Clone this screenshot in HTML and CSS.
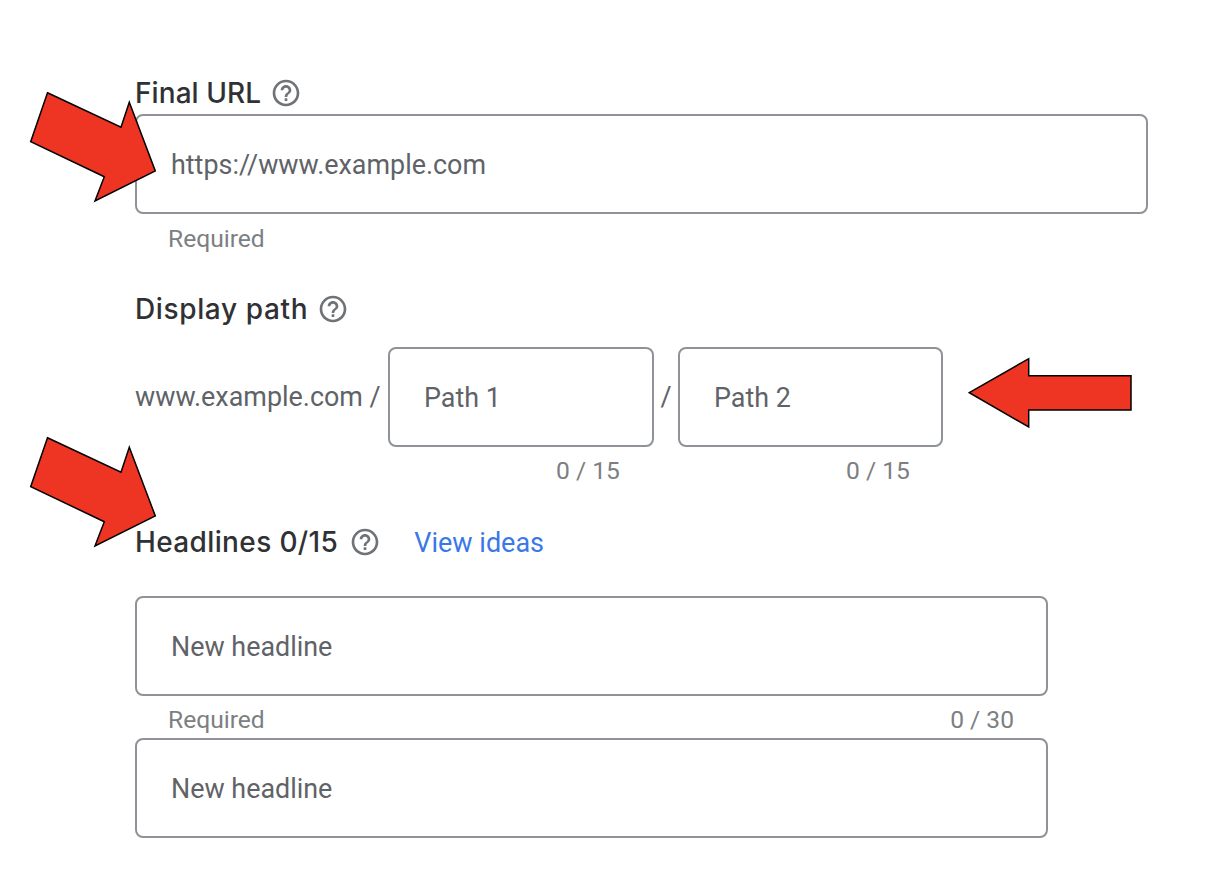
FILE: index.html
```html
<!DOCTYPE html>
<html lang="en">
<head>
  <meta charset="UTF-8">
  <meta name="viewport" content="width=device-width, initial-scale=1.0">
  <title>Final URL and headlines</title>
  <link rel="stylesheet" href="styles.css">
</head>
<body>
  <svg width="0" height="0" class="defs">
    <symbol id="help" viewBox="0 0 24 24">
      <path d="M11 18h2v-2h-2v2zm1-16C6.48 2 2 6.48 2 12s4.48 10 10 10 10-4.48 10-10S17.52 2 12 2zm0 18c-4.41 0-8-3.59-8-8s3.59-8 8-8 8 3.59 8 8-3.59 8-8 8zm0-14c-2.21 0-4 1.79-4 4h2c0-1.100.9-2 2-2s2 .9 2 2c0 2-3 1.750-3 5h2c0-2.250 3-2.500 3-5 0-2.210-1.790-4-4-4z"/>
    </symbol>
  </svg>

  <div id="app">
    <div class="label-row label-url">
      <span class="label">Final URL</span>
      <svg class="help"><use href="#help"/></svg>
    </div>
    <div class="field field-url">https://www.example.com</div>
    <div class="hint hint-url"><span>Required</span></div>

    <div class="label-row label-path">
      <span class="label">Display path</span>
      <svg class="help"><use href="#help"/></svg>
    </div>
    <div class="path-row">
      <span class="domain">www.example.com /</span>
      <div class="field field-path">Path 1</div>
      <span class="slash">/</span>
      <div class="field field-path">Path 2</div>
    </div>
    <div class="path-counts">
      <span class="count">0 / 15</span>
      <span class="count">0 / 15</span>
    </div>

    <div class="label-row label-headlines">
      <span class="label">Headlines 0/15</span>
      <svg class="help"><use href="#help"/></svg>
      <a class="ideas" href="#">View ideas</a>
    </div>
    <div class="field field-headline">New headline</div>
    <div class="hint hint-headline"><span>Required</span><span>0 / 30</span></div>
    <div class="field field-headline">New headline</div>
  </div>

  <!-- red arrows drawn on top of the form -->
  <svg class="arrows" viewBox="0 0 1232 886">
    <polygon points="47.500,92.700 121,127.300 129.300,102.300 155.300,171 95,201 104.300,176.700 30.700,141.700"/>
    <polygon points="969.300,392.700 1028.700,358.700 1028.700,375.700 1131,375.700 1131,410 1028.700,410 1028.700,427"/>
    <polygon points="47.500,437.700 121,472.300 129.300,447.300 155.300,516 95,546 104.300,521.700 30.700,486.700"/>
  </svg>
</body>
</html>
```

FILE: styles.css
```css
:root {
  --hint-color: #7c7f82;
  --border-color: #8f9397;
  --link-color: #3b78e7;
}

* {
  box-sizing: border-box;
  margin: 0;
  padding: 0;
}

body {
  position: relative;
  height: 886px;
  overflow: hidden;
  background: white;
  font-family: 'Roboto', Arial, sans-serif;
  color: #5f6368;
}

.defs {
  position: absolute;
}

#app {
  padding: 74px 84px 0 135px;
}

.label-row {
  display: flex;
  align-items: center;
  height: 40px;
  padding-bottom: 2px;
}

.label {
  font-family: 'Inter', 'Roboto', sans-serif;
  font-size: 28px;
  font-weight: 500;
  color: #303134;
}

.label-url .label {
  letter-spacing: 0.08px;
}

.label-path .label {
  letter-spacing: 0.63px;
}

.label-headlines .label {
  letter-spacing: 0.37px;
}

.help {
  width: 32px;
  height: 32px;
  margin-left: 9px;
  fill: #6f7377;
}

.label-headlines .help {
  margin-left: 11px;
}

.ideas {
  margin-left: 33px;
  padding-top: 2px;
  font-size: 27px;
  color: var(--link-color);
  text-decoration: none;
}

.field {
  display: flex;
  align-items: center;
  height: 100px;
  padding: 2px 0 0 34px;
  border: 2px solid var(--border-color);
  border-radius: 8px;
  font-size: 26.9px;
}

.hint {
  display: flex;
  justify-content: space-between;
  align-items: center;
  font-size: 24.6px;
  color: var(--hint-color);
}

.hint-url {
  height: 50px;
  padding: 0 0 2px 33px;
}

.label-path {
  margin-top: 26px;
}

.path-row {
  display: flex;
  align-items: center;
  margin-top: 17px;
  font-size: 26.9px;
}

.domain {
  width: 253px;
  white-space: nowrap;
}

.field-path {
  width: 265px;
}

.field-path:nth-child(2) {
  width: 266px;
}

.slash {
  width: 24px;
  text-align: center;
}

.path-counts {
  display: flex;
  height: 48px;
  align-items: center;
  padding: 0 0 2px 421px;
  font-size: 24.6px;
  color: var(--hint-color);
}

.count {
  width: 290px;
}

.label-headlines {
  margin-top: 28px;
}

.field-headline {
  width: 913px;
}

.label-headlines + .field-headline {
  margin-top: 33px;
}

.hint-headline {
  width: 913px;
  height: 42px;
  padding: 5px 34px 0 33px;
}

.arrows {
  position: absolute;
  top: 0;
  left: 0;
  width: 1232px;
  height: 886px;
  fill: #ee3524;
  stroke: black;
  stroke-width: 1.500;
}
```
